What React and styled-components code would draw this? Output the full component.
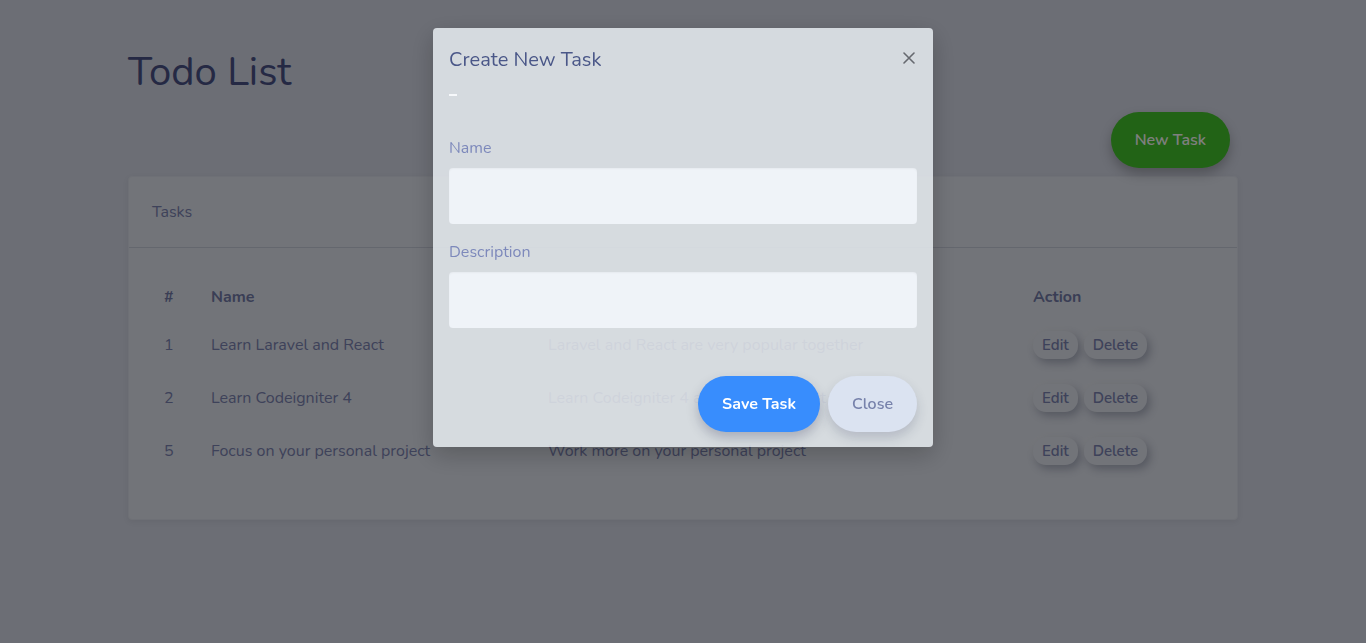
import React from "react";
import styled, { createGlobalStyle } from "styled-components";

const Global = createGlobalStyle`
  html, body { margin: 0; padding: 0; }
  body {
    background: #d8dcea;
    font-family: "Nunito", "Lato", "Noto Sans", sans-serif;
    color: #7c84b4;
    font-size: 16px;
    line-height: 1.5;
  }
  * { box-sizing: border-box; }
`;

const Container = styled.div`
  width: 1140px;
  margin: 0 auto;
  padding: 48px 15px 40px;
`;

const Title = styled.h1`
  margin: 0;
  font-size: 40px;
  font-weight: 400;
  line-height: 48px;
  color: #4a5288;
`;

const Toolbar = styled.div`
  display: flex;
  justify-content: flex-end;
  padding-right: 8px;
  margin-top: 16px;
  margin-bottom: 8px;
`;

const PillButton = styled.button`
  height: 56px;
  padding: 0 24px;
  border: none;
  border-radius: 28px;
  font-family: inherit;
  font-size: 16px;
  font-weight: ${(p) => (p.$bold ? 700 : 600)};
  background: ${(p) => p.$bg};
  color: ${(p) => p.$fg};
  box-shadow: ${(p) => p.$shadow || "0 6px 12px rgba(0,0,0,0.25)"};
  cursor: pointer;
`;

const Card = styled.div`
  background: #e4e8f2;
  border: 1px solid #dde1ec;
  border-radius: 4px;
  box-shadow: 0 2px 6px rgba(0,0,0,0.06);
`;

const CardHeader = styled.div`
  padding: 23px 23px;
  border-bottom: 1px solid #c9cedd;
  font-size: 16px;
  line-height: 24px;
  color: #7c84b4;
`;

const CardBody = styled.div`
  padding: 27px 23px 26px;
`;

const Table = styled.table`
  width: 100%;
  border-collapse: collapse;
  margin-bottom: 16px;
  table-layout: fixed;
`;

const Th = styled.th`
  text-align: left;
  font-weight: 700;
  font-size: 16px;
  padding: 10px 12px 9px;
  line-height: 24px;
  color: #747caa;
  width: ${(p) => p.$w || "auto"};
`;

const Td = styled.td`
  padding: 12px 12px;
  border-top: 1px solid transparent;
  font-size: 16px;
  line-height: 28px;
  color: #7c84b4;
  white-space: nowrap;
`;

const Actions = styled.div`
  display: flex;
  gap: 6px;
`;

const SmallButton = styled.button`
  height: 28px;
  padding: 0 9px;
  border: none;
  border-radius: 13px;
  background: #e4e8f2;
  color: #7c84b4;
  font-family: inherit;
  font-size: 15px;
  font-weight: 600;
  box-shadow: 3px 4px 8px rgba(40,48,80,0.3), -2px -2px 5px rgba(255,255,255,0.3);
`;

const Backdrop = styled.div`
  position: fixed;
  inset: 0;
  background: rgba(0, 0, 0, 0.5);
`;

const ModalWrap = styled.div`
  position: fixed;
  inset: 0;
  display: flex;
  justify-content: center;
  align-items: flex-start;
  padding-top: 28px;
`;

const Modal = styled.div`
  width: 500px;
  background: rgba(232, 236, 241, 0.85);
  border-radius: 4px;
  box-shadow: 0 8px 24px rgba(0,0,0,0.2);
`;

const ModalHeader = styled.div`
  display: flex;
  justify-content: space-between;
  align-items: flex-start;
  padding: 17px 16px 0 16px;
`;

const ModalTitle = styled.h5`
  margin: 0;
  font-size: 20px;
  font-weight: 400;
  line-height: 30px;
  color: #4a5788;
`;

const CloseX = styled.button`
  border: none;
  background: none;
  padding: 0;
  margin-top: 5px;
  width: 16px;
  height: 16px;
  display: flex;
  align-items: center;
  justify-content: center;
  cursor: pointer;
`;

const Dash = styled.div`
  width: 8px;
  height: 2px;
  margin: 19px 0 0 16px;
  background: #f6f8fb;
`;

const ModalBody = styled.div`
  padding: 39px 16px 0;
`;

const Group = styled.div`
  margin-bottom: 15px;
`;

const Label = styled.label`
  display: block;
  font-size: 16px;
  line-height: 26px;
  margin-bottom: 7px;
  color: #7d89bb;
`;

const Input = styled.input`
  display: block;
  width: 100%;
  height: 56px;
  border: none;
  border-radius: 4px;
  background: #eff3f8;
  box-shadow: inset 0 1px 2px rgba(0,0,0,0.04);
  font-family: inherit;
  font-size: 16px;
  outline: none;
`;

const ModalFooter = styled.div`
  display: flex;
  justify-content: flex-end;
  gap: 8px;
  padding: 33px 16px 15px;
`;

const tasks = [
  { id: 1, name: "Learn Laravel and React", desc: "Laravel and React are very popular together" },
  { id: 2, name: "Learn Codeigniter 4", desc: "Learn Codeigniter 4 and build a project" },
  { id: 5, name: "Focus on your personal project", desc: "Work more on your personal project" },
];

export default function App() {
  return (
    <>
      <Global />
      <Container>
        <Title>Todo List</Title>
        <Toolbar>
          <PillButton $bg="#44c62c" $fg="#ffffff">New Task</PillButton>
        </Toolbar>
        <Card>
          <CardHeader>Tasks</CardHeader>
          <CardBody>
            <Table>
              <thead>
                <tr>
                  <Th $w="47px">#</Th>
                  <Th $w="337px">Name</Th>
                  <Th $w="485px">Description</Th>
                  <Th>Action</Th>
                </tr>
              </thead>
              <tbody>
                {tasks.map((t) => (
                  <tr key={t.id}>
                    <Td>{t.id}</Td>
                    <Td>{t.name}</Td>
                    <Td>{t.desc}</Td>
                    <Td>
                      <Actions>
                        <SmallButton>Edit</SmallButton>
                        <SmallButton>Delete</SmallButton>
                      </Actions>
                    </Td>
                  </tr>
                ))}
              </tbody>
            </Table>
          </CardBody>
        </Card>
      </Container>
      <Backdrop />
      <ModalWrap>
        <Modal>
          <ModalHeader>
            <ModalTitle>Create New Task</ModalTitle>
            <CloseX aria-label="Close">
              <svg width="12" height="12" viewBox="0 0 12 12">
                <path d="M1 1 L11 11 M11 1 L1 11" stroke="#66696f" strokeWidth="1.6" strokeLinecap="round" />
              </svg>
            </CloseX>
          </ModalHeader>
          <Dash />
          <ModalBody>
            <Group>
              <Label>Name</Label>
              <Input type="text" />
            </Group>
            <Group>
              <Label>Description</Label>
              <Input type="text" />
            </Group>
          </ModalBody>
          <ModalFooter>
            <PillButton $bg="#388dfd" $fg="#ffffff" $bold $shadow="0 6px 12px rgba(30,40,70,0.25)">Save Task</PillButton>
            <PillButton $bg="#dbe3f1" $fg="#7782ab" $shadow="0 6px 12px rgba(30,40,70,0.18)">Close</PillButton>
          </ModalFooter>
        </Modal>
      </ModalWrap>
    </>
  );
}
